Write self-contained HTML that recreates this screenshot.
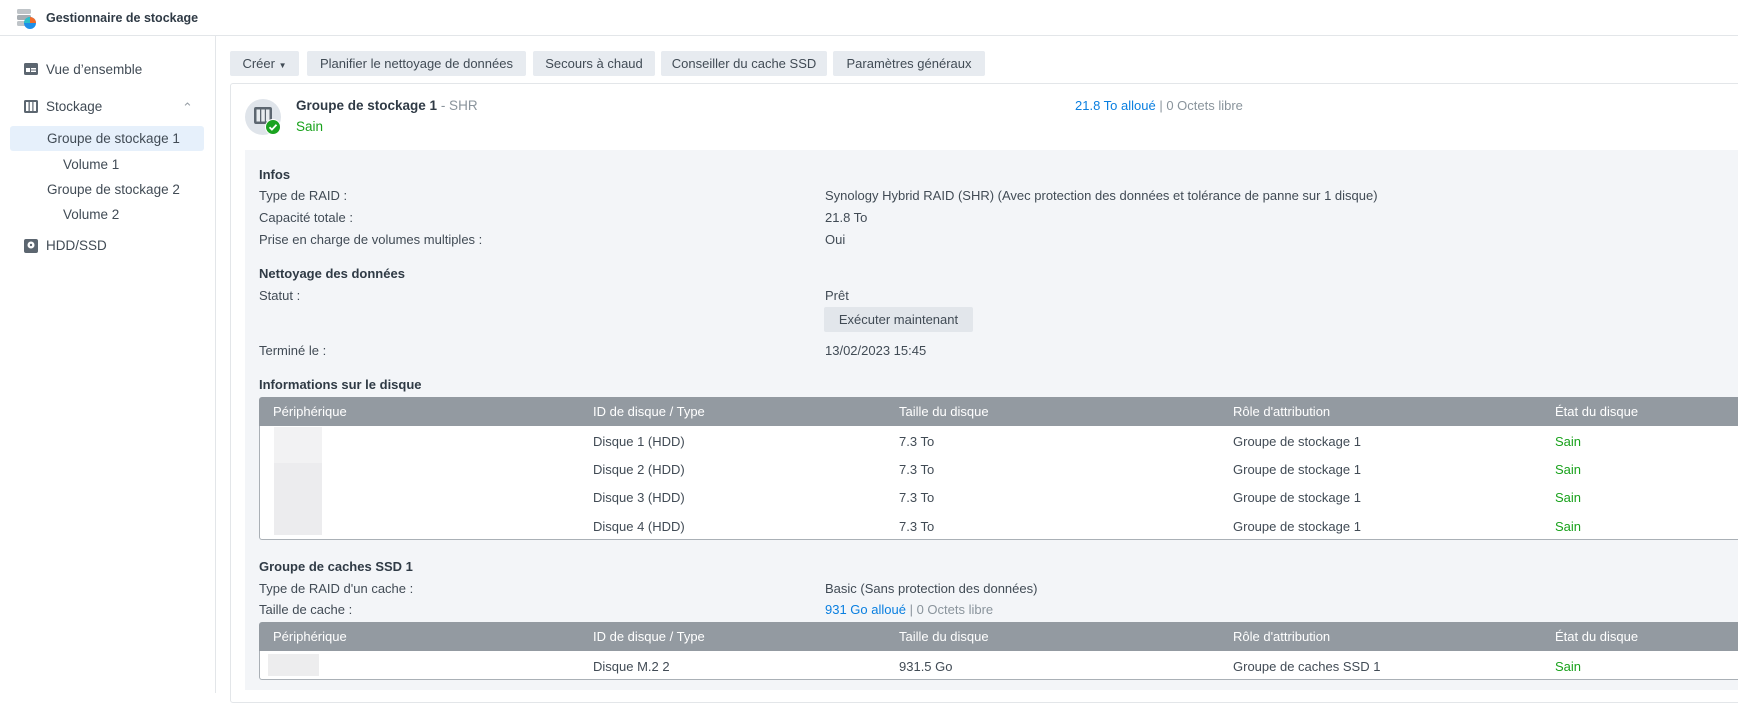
<!DOCTYPE html>
<html><head><meta charset="utf-8"><style>
*{box-sizing:border-box;margin:0;padding:0}
body{width:1738px;height:693px;overflow:hidden;background:#fff;font-family:"Liberation Sans",sans-serif;font-size:13px;color:#414b55;position:relative}
.a{position:absolute;white-space:nowrap}
.b{font-weight:bold;color:#2f3a45}
.g{color:#19a21c}
.bl{color:#0a7fe0}
.gr{color:#8a949c}
.btn{position:absolute;top:51px;height:25px;background:#e7ebf0;border-radius:2px;line-height:25px;text-align:center;color:#414b55}
.th{position:absolute;height:29px;background:#939aa1;left:259px;width:1490px;border-radius:3px 3px 0 0}
.th span{position:absolute;color:#fff;line-height:29px}
.tb{position:absolute;left:259px;width:1490px;background:#fff;border:1px solid #aab0b6;border-top:none;border-radius:0 0 3px 3px}
</style></head><body>
<svg class="a" style="left:15px;top:8px" width="22" height="22" viewBox="0 0 22 22"><rect x="2" y="1" width="14" height="5" rx="1.5" fill="#bfc4c8"/><rect x="2" y="7" width="14" height="5" rx="1.5" fill="#a7adb2"/><rect x="2" y="13" width="14" height="5" rx="1.5" fill="#bfc4c8"/><circle cx="15" cy="15" r="6" fill="#1e8fe8"/><path d="M15 15V9a6 6 0 0 1 6 6z" fill="#f26b2a"/><path d="M15 15h-6a6 6 0 0 1 6-6z" fill="#2bc0c9"/></svg>
<div class="a b" style="left:46px;top:11px;font-size:12.5px">Gestionnaire de stockage</div>
<div class="a" style="left:0;top:35px;width:1738px;height:1px;background:#e3e6e9"></div>
<div class="a" style="left:215px;top:36px;width:1px;height:657px;background:#e3e6e9"></div>
<svg class="a" style="left:23px;top:62px" width="16" height="14"><rect x="1" y="1" width="14" height="12" rx="1.5" fill="#5c6670"/><rect x="3" y="6" width="4" height="4" fill="#fff"/><rect x="8" y="6" width="5" height="1.5" fill="#fff"/><rect x="8" y="8.5" width="5" height="1.5" fill="#fff"/></svg>
<div class="a" style="left:46px;top:62px;font-size:13.5px">Vue d’ensemble</div>
<svg class="a" style="left:23px;top:99px" width="16" height="15"><rect x="1" y="1" width="14" height="13" rx="1.5" fill="#5c6670"/><rect x="3" y="3" width="2.5" height="9" fill="#fff"/><rect x="6.8" y="3" width="2.5" height="9" fill="#fff"/><rect x="10.5" y="3" width="2.5" height="9" fill="#fff"/></svg>
<div class="a" style="left:46px;top:99px;font-size:13.5px">Stockage</div>
<div class="a" style="left:182px;top:100px;color:#9aa1a8">&#8963;</div>
<div class="a" style="left:10px;top:126px;width:194px;height:25px;background:#e6f0fb;border-radius:3px"></div>
<div class="a" style="left:47px;top:131px;font-size:13.5px">Groupe de stockage 1</div>
<div class="a" style="left:63px;top:157px;font-size:13.5px">Volume 1</div>
<div class="a" style="left:47px;top:182px;font-size:13.5px">Groupe de stockage 2</div>
<div class="a" style="left:63px;top:207px;font-size:13.5px">Volume 2</div>
<svg class="a" style="left:23px;top:238px" width="16" height="16"><rect x="1" y="1" width="14" height="14" rx="2" fill="#5c6670"/><circle cx="8" cy="7" r="3.5" fill="#fff"/><circle cx="8" cy="7" r="1.2" fill="#5c6670"/></svg>
<div class="a" style="left:46px;top:238px;font-size:13.5px">HDD/SSD</div>

<div class="btn" style="left:230px;width:69px">Créer <span style="font-size:8px">▼</span></div>
<div class="btn" style="left:307px;width:219px">Planifier le nettoyage de données</div>
<div class="btn" style="left:533px;width:122px">Secours à chaud</div>
<div class="btn" style="left:661px;width:166px">Conseiller du cache SSD</div>
<div class="btn" style="left:833px;width:152px">Paramètres généraux</div>

<div class="a" style="left:230px;top:83px;width:1520px;height:620px;border:1px solid #e3e6e9;border-radius:3px"></div>
<div class="a" style="left:245px;top:99px;width:36px;height:36px;border-radius:50%;background:#dfe4ea"></div>
<svg class="a" style="left:253px;top:106px" width="20" height="20"><rect x="1" y="1" width="18" height="17" rx="2" fill="#5c6670"/><rect x="3.5" y="3.5" width="3.5" height="12" fill="#e8ecef"/><rect x="8.3" y="3.5" width="3.5" height="12" fill="#e8ecef"/><rect x="13" y="3.5" width="3.5" height="12" fill="#e8ecef"/></svg>
<svg class="a" style="left:265px;top:119px" width="16" height="16"><circle cx="8" cy="8" r="7.5" fill="#1aa320" stroke="#fff" stroke-width="1"/><path d="M4.5 8.2l2.4 2.4 4.6-4.8" stroke="#fff" stroke-width="1.8" fill="none"/></svg>
<div class="a" style="left:296px;top:98px;font-size:13.5px"><span class="b">Groupe de stockage 1</span> <span class="gr">- SHR</span></div>
<div class="a g" style="left:296px;top:119px;font-size:13.5px">Sain</div>
<div class="a" style="left:1075px;top:98px"><span class="bl">21.8 To alloué</span> <span class="gr">| 0 Octets libre</span></div>

<div class="a" style="left:245px;top:150px;width:1500px;height:540px;background:#f3f5f8"></div>
<div class="a b" style="left:259px;top:167px">Infos</div>
<div class="a" style="left:259px;top:188px">Type de RAID :</div>
<div class="a" style="left:825px;top:188px">Synology Hybrid RAID (SHR) (Avec protection des données et tolérance de panne sur 1 disque)</div>
<div class="a" style="left:259px;top:210px">Capacité totale :</div>
<div class="a" style="left:825px;top:210px">21.8 To</div>
<div class="a" style="left:259px;top:232px">Prise en charge de volumes multiples :</div>
<div class="a" style="left:825px;top:232px">Oui</div>
<div class="a b" style="left:259px;top:266px">Nettoyage des données</div>
<div class="a" style="left:259px;top:288px">Statut :</div>
<div class="a" style="left:825px;top:288px">Prêt</div>
<div class="a" style="left:824px;top:307px;width:149px;height:25px;background:#e2e6eb;border-radius:2px;text-align:center;line-height:25px">Exécuter maintenant</div>
<div class="a" style="left:259px;top:343px">Terminé le :</div>
<div class="a" style="left:825px;top:343px">13/02/2023 15:45</div>
<div class="a b" style="left:259px;top:377px">Informations sur le disque</div>

<div class="th" style="top:397px"><span style="left:14px">Périphérique</span><span style="left:334px">ID de disque / Type</span><span style="left:640px">Taille du disque</span><span style="left:974px">Rôle d'attribution</span><span style="left:1296px">État du disque</span></div>
<div class="tb" style="top:426px;height:114px"></div>
<div class="a" style="left:274px;top:427px;width:48px;height:108px;background:#ececee"></div>
<div class="a" style="left:274px;top:427px;width:48px;height:36px;background:#f2f2f3"></div>
<div class="a" style="left:593px;top:434px">Disque 1 (HDD)</div><div class="a" style="left:899px;top:434px">7.3 To</div><div class="a" style="left:1233px;top:434px">Groupe de stockage 1</div><div class="a g" style="left:1555px;top:434px">Sain</div>
<div class="a" style="left:593px;top:462px">Disque 2 (HDD)</div><div class="a" style="left:899px;top:462px">7.3 To</div><div class="a" style="left:1233px;top:462px">Groupe de stockage 1</div><div class="a g" style="left:1555px;top:462px">Sain</div>
<div class="a" style="left:593px;top:490px">Disque 3 (HDD)</div><div class="a" style="left:899px;top:490px">7.3 To</div><div class="a" style="left:1233px;top:490px">Groupe de stockage 1</div><div class="a g" style="left:1555px;top:490px">Sain</div>
<div class="a" style="left:593px;top:519px">Disque 4 (HDD)</div><div class="a" style="left:899px;top:519px">7.3 To</div><div class="a" style="left:1233px;top:519px">Groupe de stockage 1</div><div class="a g" style="left:1555px;top:519px">Sain</div>

<div class="a b" style="left:259px;top:559px">Groupe de caches SSD 1</div>
<div class="a" style="left:259px;top:581px">Type de RAID d'un cache :</div>
<div class="a" style="left:825px;top:581px">Basic (Sans protection des données)</div>
<div class="a" style="left:259px;top:602px">Taille de cache :</div>
<div class="a" style="left:825px;top:602px"><span class="bl">931 Go alloué</span> <span class="gr">| 0 Octets libre</span></div>

<div class="th" style="top:622px"><span style="left:14px">Périphérique</span><span style="left:334px">ID de disque / Type</span><span style="left:640px">Taille du disque</span><span style="left:974px">Rôle d'attribution</span><span style="left:1296px">État du disque</span></div>
<div class="tb" style="top:651px;height:29px"></div>
<div class="a" style="left:268px;top:654px;width:51px;height:22px;background:#ededee"></div>
<div class="a" style="left:593px;top:659px">Disque M.2 2</div><div class="a" style="left:899px;top:659px">931.5 Go</div><div class="a" style="left:1233px;top:659px">Groupe de caches SSD 1</div><div class="a g" style="left:1555px;top:659px">Sain</div>
</body></html>
